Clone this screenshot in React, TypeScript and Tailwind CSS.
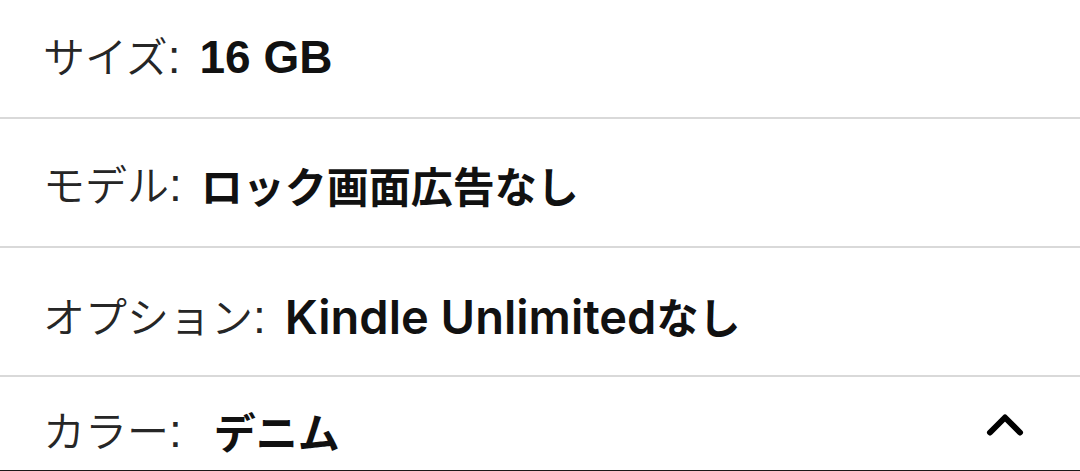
import { ChevronUp } from 'lucide-react';

const jp = { fontFamily: '"Noto Sans CJK JP", "Liberation Sans", sans-serif' };

interface Row {
  label: string;
  value: React.ReactNode;
  pad: string;
}

const latin = 'font-["Liberation_Sans","Noto_Sans_CJK_JP",sans-serif] text-[46px]';

const rows: Row[] = [
  { label: 'サイズ', pad: 'h-[119px] pb-[3px]', value: <span className={`${latin} font-bold`}>16 GB</span> },
  { label: 'モデル', pad: 'h-[129px] pt-[5px]', value: <span className="font-bold">ロック画面広告なし</span> },
  {
    label: 'オプション',
    pad: 'h-[129px] pt-[10px]',
    value: (
      <span className="font-bold">
        <span className='font-["Inter","Liberation_Sans",sans-serif] font-semibold text-[47px]'>Kindle Unlimited</span>なし
      </span>
    ),
  },
];

function Label({ text }: { text: string }) {
  return (
    <span className="font-[350] text-[#262626]">
      {text}
      <span className={`${latin} font-normal`}>:</span>
    </span>
  );
}

export default function App() {
  return (
    <div className="w-[1080px] h-[471px] bg-white overflow-hidden text-[42px] leading-none text-[#111]" style={jp}>
      {rows.map((row) => (
        <div key={row.label} className={`flex items-center pl-[43px] border-b-2 border-[#d9d9d9] ${row.pad}`}>
          <Label text={row.label} />
          <span className="ml-[19px]">{row.value}</span>
        </div>
      ))}
      <div className="flex items-center justify-between h-[95px] pt-[14px] pl-[43px] pr-[45px] border-b-2 border-[#1a1a1a]">
        <div className="flex items-center">
          <Label text="カラー" />
          <span className="ml-[32px] font-bold">デニム</span>
        </div>
        <ChevronUp size={60} strokeWidth={2.4} className="text-black -mt-[12px]" />
      </div>
    </div>
  );
}
